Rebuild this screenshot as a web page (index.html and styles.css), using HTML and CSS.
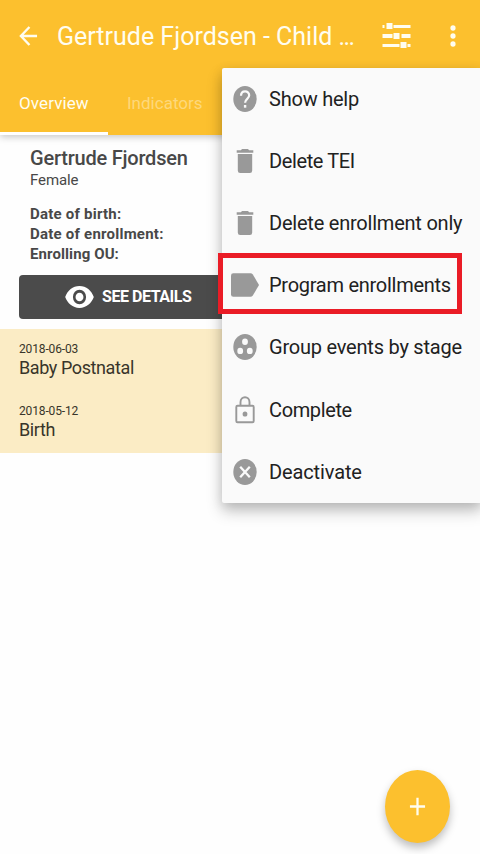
FILE: index.html
```html
<!DOCTYPE html>
<html lang="en">
<head>
<meta charset="utf-8">
<meta name="viewport" content="width=device-width, initial-scale=1">
<title>Gertrude Fjordsen - Child Programme</title>
<link rel="stylesheet" href="styles.css">
</head>
<body>
<div class="app">
  <header class="header">
    <div class="toolbar">
      <svg class="back" viewBox="0 0 20 22" fill="none" stroke="currentColor" stroke-width="2.5"><path d="M19 11H2.5M11 1.5L2 11l9 9.5"/></svg>
      <h1 class="title">Gertrude Fjordsen - Child <span class="dots">...</span></h1>
      <svg class="tune" viewBox="0 0 28 26" fill="currentColor"><path d="M0 2h2v3H0zM4 0h6v6H4zM11 2h17v3H11zM0 11h10v4H0zM11 10h6v6h-6zM19 11h9v4h-9zM0 21h17v3H0zM18 19h6v6h-6zM25 21h3v3h-3z"/></svg>
      <svg class="more" viewBox="0 0 6 22" fill="currentColor"><ellipse cx="3" cy="3" rx="2.6" ry="2.8"/><ellipse cx="3" cy="11" rx="2.6" ry="2.8"/><ellipse cx="3" cy="19" rx="2.6" ry="2.8"/></svg>
    </div>
    <nav class="tabs">
      <span class="tab active">Overview</span>
      <span class="tab second">Indicators</span>
    </nav>
  </header>
  <section class="card">
    <h2 class="name">Gertrude Fjordsen</h2>
    <p class="gender">Female</p>
    <div class="facts">
      <p class="birth">Date of birth:</p>
      <p class="enrolled">Date of enrollment:</p>
      <p class="unit">Enrolling OU:</p>
    </div>
    <div class="details">
      <svg class="eye" viewBox="0 0 30 24" fill="#fff"><path fill-rule="evenodd" d="M15 .7C8 .7 2.500 5.500.2 12 2.500 18.500 8 23.300 15 23.300S27.500 18.500 29.800 12C27.500 5.500 22 .7 15 .7zM15 4.500a6.800 7.500 0 1 1 0 15 6.800 7.500 0 0 1 0-15zM15 7.500a4.100 4.500 0 1 0 0 9 4.100 4.500 0 0 0 0-9z"/></svg>
      <span class="details-label">SEE DETAILS</span>
    </div>
  </section>
  <section class="events">
    <div class="event"><time>2018-06-03</time><p class="baby">Baby Postnatal</p></div>
    <div class="event"><time>2018-05-12</time><p class="born">Birth</p></div>
  </section>
  <aside class="menu">
    <div class="item"><svg viewBox="0 0 28 28"><ellipse cx="14" cy="14" rx="11.700" ry="13" fill="#999"/><path d="M10 10.800c0-6 8.200-5.700 8.200-.5 0 3.500-4.100 3.600-4.100 7.500" fill="none" stroke="#fafafa" stroke-width="2.200"/><path d="M12.900 20h2.400v2.700h-2.400z" fill="#fafafa"/></svg><span class="help">Show help</span></div>
    <div class="item"><svg viewBox="0 0 28 28" fill="#999"><path d="M5.700 3.200h4.200L11 2h6l1.100 1.200h4.200v2.600H5.700zM6.800 7h14.400v16.500a2.400 2.500 0 0 1-2.400 2.500H9.200a2.400 2.500 0 0 1-2.400-2.500z"/></svg><span class="delete">Delete TEI</span></div>
    <div class="item"><svg viewBox="0 0 28 28" fill="#999"><path d="M5.700 3.200h4.200L11 2h6l1.100 1.200h4.200v2.600H5.700zM6.800 7h14.400v16.500a2.400 2.500 0 0 1-2.400 2.500H9.200a2.400 2.500 0 0 1-2.400-2.500z"/></svg><span>Delete enrollment only</span></div>
    <div class="item"><svg viewBox="0 0 28 28" fill="#999"><path d="M2.300 2.200h17.200q1.400 0 2.300 1.200L28 14l-6.200 10.600q-.9 1.200-2.300 1.200H2.300Q0 25.800 0 23.500v-19q0-2.300 2.300-2.300z"/></svg><span class="program">Program enrollments</span></div>
    <div class="item"><svg viewBox="0 0 28 28"><ellipse cx="14" cy="14" rx="11.700" ry="13" fill="#999"/><g fill="#fafafa"><ellipse cx="14" cy="8.700" rx="2.900" ry="3.200"/><ellipse cx="9.200" cy="17.900" rx="2.900" ry="3.200"/><ellipse cx="18.800" cy="17.900" rx="2.900" ry="3.200"/></g></svg><span>Group events by stage</span></div>
    <div class="item"><svg viewBox="0 0 28 28"><path d="M6.500 9.700h15q1.200 0 1.200 1.300v14q0 1.300-1.200 1.300h-15q-1.200 0-1.200-1.300V11q0-1.300 1.200-1.300zM9.500 9.500V6.200c0-6.600 9-6.600 9 0v3.300" fill="none" stroke="#999" stroke-width="1.900"/><ellipse cx="14" cy="18" rx="2.400" ry="2.600" fill="#999"/></svg><span class="complete">Complete</span></div>
    <div class="item"><svg viewBox="0 0 28 28"><ellipse cx="14" cy="14" rx="11.700" ry="13" fill="#999"/><path d="M9.200 8.700l9.600 10.600M18.800 8.700L9.200 19.300" stroke="#fafafa" stroke-width="2.300"/></svg><span class="deactivate">Deactivate</span></div>
    <div class="highlight"></div>
  </aside>
  <div class="fab"><svg viewBox="0 0 18 20" stroke="currentColor" stroke-width="2.400"><path d="M1 10h16M9 .7v18.600"/></svg></div>
</div>
</body>
</html>
```
FILE: styles.css
```css
* { box-sizing: border-box; }
body { margin: 0; font-family: Roboto, "Liberation Sans", sans-serif; background: #fefefe; }
h1, h2, p { margin: 0; font-weight: 400; white-space: nowrap; }
.app { position: relative; height: 854px; overflow: hidden; }
.header { position: relative; height: 135px; background: #fcc02e; color: #fffdf0; box-shadow: 0 2px 7px rgba(0,0,0,.22); }
.toolbar { display: flex; align-items: center; height: 72px; padding-left: 19px; }
.back { width: 19px; height: 22px; margin-right: 19px; }
.title { width: 325px; padding-top: 1px; font-size: 25px; line-height: 32px; }
.dots { letter-spacing: -1.6px; }
.tune { width: 29px; height: 26px; margin-right: 39px; }
.more { width: 6px; height: 22px; }
.tabs { display: flex; height: 63px; }
.tab { height: 63px; padding: 21px 0 0 19px; font-size: 17px; line-height: 20px; white-space: nowrap; color: #fed87b; }
.tab.active { width: 108px; color: #fffdf0; border-bottom: 3px solid #fff; letter-spacing: .1px; }
.card { height: 194px; padding: 12px 19px 0; color: #484848; }
.name, .gender, .facts { margin-left: 11px; }
.name { font-size: 20px; line-height: 22px; font-weight: 500; letter-spacing: -.22px; }
.gender { margin-top: 2px; font-size: 15px; line-height: 18px; letter-spacing: -.1px; }
.facts { margin-top: 15px; font-size: 15px; line-height: 20px; }
.facts p { font-weight: 700; letter-spacing: .23px; }
.facts .unit { letter-spacing: .1px; }
.details { display: flex; align-items: center; width: 442px; height: 44px; margin-top: 11px; padding: 0 0 1px 46px; gap: 8px; background: #4b4b4b; border-radius: 4px; color: #fff; }
.eye { width: 29px; height: 24px; }
.details-label { font-size: 16px; font-weight: 700; letter-spacing: -.45px; }
.events { height: 124px; background: #fbecc5; color: #38352a; }
.event { height: 62px; padding: 12px 19px 0; }
.event time { display: block; font-size: 12px; line-height: 16px; letter-spacing: -.15px; }
.event p { font-size: 18px; line-height: 22px; letter-spacing: -.4px; }
.menu { position: absolute; left: 222px; top: 68px; width: 260px; height: 435px; background: #fafafa; border-radius: 2px; box-shadow: 0 8px 16px rgba(0,0,0,.23), 0 3px 12px rgba(0,0,0,.1); }
.item { display: flex; align-items: center; height: 62.2px; padding: 0 0 1px 9px; gap: 10px; font-size: 20px; letter-spacing: -.22px; color: #212121; white-space: nowrap; }
.item .delete, .item .complete { letter-spacing: -.38px; }
.item .program { letter-spacing: -.27px; }
.item .deactivate { letter-spacing: -.12px; }
.item svg { width: 28px; height: 28px; }
.highlight { position: absolute; left: -4px; top: 185px; width: 244px; height: 61px; border: 5px solid #ea1c26; }
.fab { position: absolute; left: 385px; top: 770px; width: 65px; height: 73px; display: flex; align-items: center; justify-content: center; border-radius: 50%; background: #fcc02e; color: #fffdf0; box-shadow: 0 5px 9px rgba(0,0,0,.25); }
.fab svg { width: 17px; height: 19px; }
```
